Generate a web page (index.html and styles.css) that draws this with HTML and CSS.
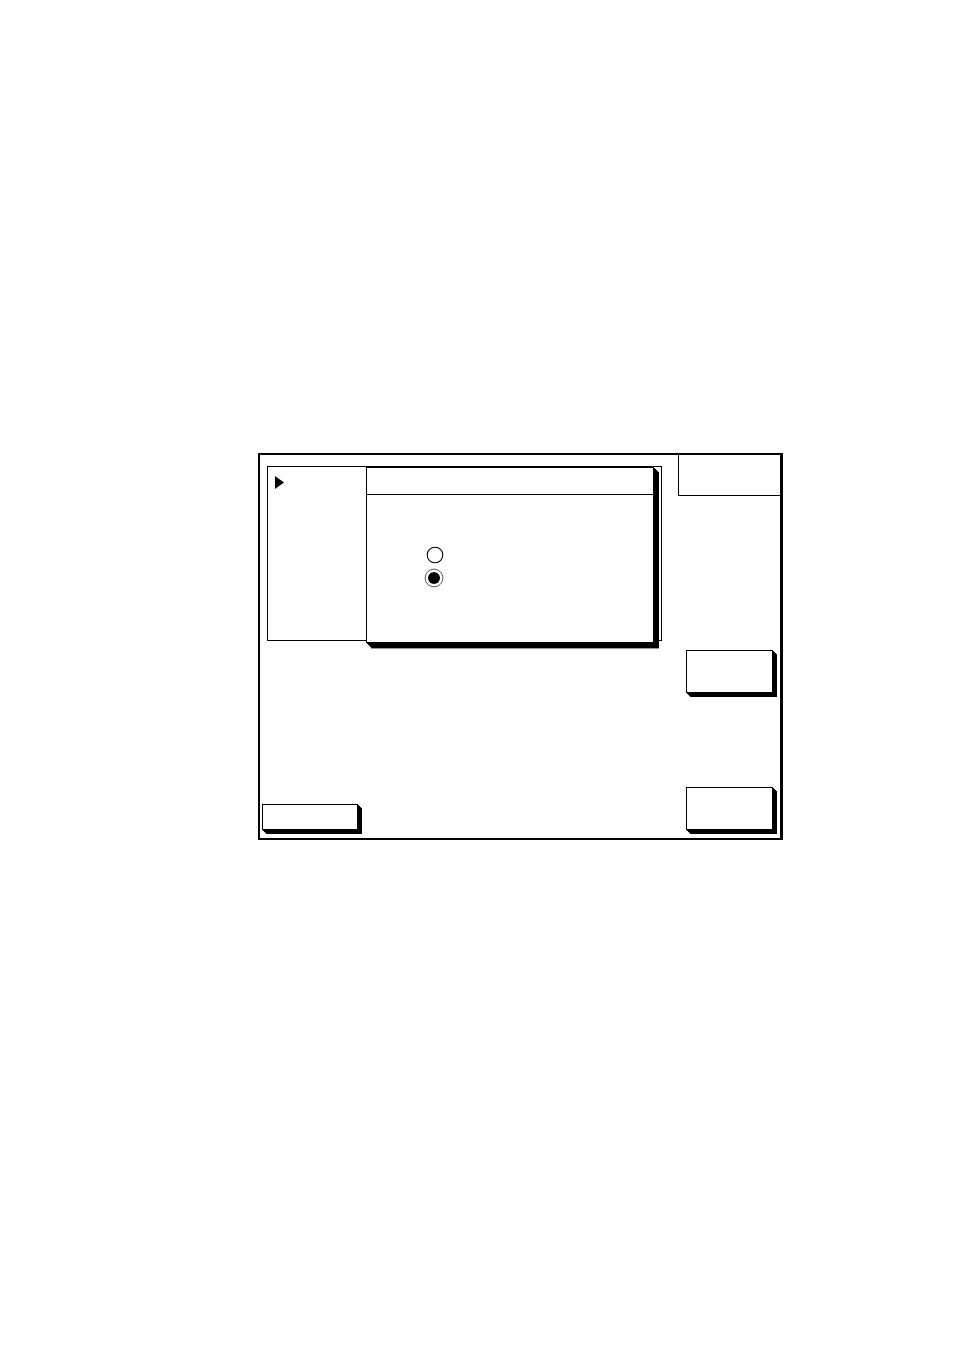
FILE: index.html
```
<!DOCTYPE html>
<html>
<head>
<meta charset="utf-8">
<link rel="stylesheet" href="styles.css">
</head>
<body>
<div class="frame">
  <div class="left-col">
    <div class="list-box">
      <svg class="cursor" width="9" height="13" viewBox="0 0 9 13"><polygon points="0,0 9,6.5 0,13" fill="#000"/></svg>
    </div>
    <div class="btn btn-wide"></div>
  </div>
  <div class="right-col">
    <div class="corner-box"></div>
    <div class="btn btn-side btn-first"></div>
    <div class="btn btn-side btn-last"></div>
  </div>
  <div class="dialog">
    <div class="dialog-head"></div>
    <div class="dialog-body">
      <svg class="radio radio-off" width="20" height="20" viewBox="0 0 20 20"><circle cx="10" cy="10" r="7.8" fill="#fff" stroke="#000" stroke-width="1.1"/></svg>
      <svg class="radio radio-on" width="20" height="20" viewBox="0 0 20 20"><circle cx="10" cy="10" r="8.9" fill="#fff" stroke="#444" stroke-width="0.9"/><circle cx="10" cy="10" r="6" fill="#000"/></svg>
    </div>
  </div>
</div>
</body>
</html>
```
FILE: styles.css
```
html, body {
  margin: 0;
  padding: 0;
  background: #fff;
  font-family: "Liberation Sans", Arial, sans-serif;
}

.frame {
  position: relative;
  box-sizing: border-box;
  margin: 453px 0 0 258px;
  width: 525px;
  height: 387px;
  border-style: solid;
  border-color: #000;
  border-width: 2px 3px 2px 2px;
  display: grid;
  grid-template-columns: 418px 102px;
}

.left-col {
  display: flex;
  flex-direction: column;
  justify-content: space-between;
  padding-bottom: 8px;
}

.list-box {
  box-sizing: border-box;
  margin: 11px 0 0 7px;
  width: 395px;
  height: 175px;
  border: 1px solid #000;
  padding: 9px 0 0 7px;
}

.cursor {
  display: block;
}

.right-col {
  display: flex;
  flex-direction: column;
  padding-bottom: 8px;
}

.corner-box {
  box-sizing: border-box;
  height: 41px;
  border-left: 1px solid #000;
  border-bottom: 1px solid #000;
}

.btn {
  box-sizing: border-box;
  border: 1px solid #000;
  background: #fff;
  box-shadow: 1px 1px 0 #000, 2px 2px 0 #000, 3px 3px 0 #000, 4px 4px 0 #000;
}

.btn-wide {
  margin-left: 2px;
  width: 96px;
  height: 26px;
}

.btn-side {
  margin-left: 8px;
  width: 87px;
  height: 43px;
}

.btn-first {
  margin-top: 154px;
}

.btn-last {
  margin-top: auto;
}

.dialog {
  position: absolute;
  left: 106px;
  top: 12px;
  box-sizing: border-box;
  width: 288px;
  height: 176px;
  border: 1px solid #000;
  background: #fff;
  box-shadow: 1px 1px 0 #000, 2px 2px 0 #000, 3px 3px 0 #000, 4px 4px 0 #000, 5px 5px 0 #000, 5px 6px 0 #999;
  display: flex;
  flex-direction: column;
}

.dialog-head {
  height: 26px;
  border-bottom: 1px solid #000;
}

.dialog-body {
  display: flex;
  flex-direction: column;
  gap: 3px;
  padding: 50px 0 0 58px;
}

.radio {
  display: block;
}

.radio-on {
  margin-left: -1px;
}
```
